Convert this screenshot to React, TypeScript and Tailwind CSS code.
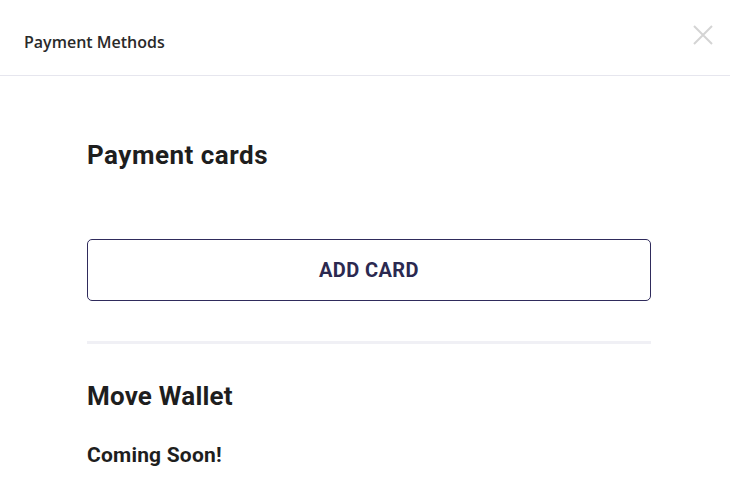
import React from "react";

export default function App() {
  return (
    <div className="w-[730px] h-[500px] bg-white overflow-hidden" style={{ fontFamily: "Roboto, 'Noto Sans', sans-serif" }}>
      <div className="h-[76px] border-b border-[#e6e6ee] flex items-center justify-between pl-[24px] pr-[16px]">
        <span className="text-[16px] font-semibold text-[#2a2a2a] pt-[8px]" style={{ fontFamily: "'Open Sans', Lato, sans-serif" }}>Payment Methods</span>
        <svg width="22" height="22" viewBox="0 0 22 22" className="mb-[5px]">
          <path d="M2 2 L20 20 M20 2 L2 20" stroke="#d4d4d4" strokeWidth="2" />
        </svg>
      </div>
      <div className="pl-[87px] w-[651px] flex flex-col">
        <h2 className="mt-[63px] text-[26px] font-bold text-[#1e1e1e] leading-[32px] tracking-[0.5px]">Payment cards</h2>
        <button className="mt-[68px] h-[62px] w-full border border-[#2f2b5c] rounded-[5px] text-[20px] font-bold text-[#2b2950] tracking-[0.4px] flex items-center justify-center">
          ADD CARD
        </button>
        <div className="mt-[40px] h-[3px] bg-[#f0f0f5]" />
        <h2 className="mt-[36px] text-[26px] font-bold text-[#1e1e1e] leading-[32px] tracking-[0.2px]">Move Wallet</h2>
        <p className="mt-[30px] text-[21px] font-bold text-[#1e1e1e] leading-[26px] tracking-[0.2px]">Coming Soon!</p>
      </div>
    </div>
  );
}
